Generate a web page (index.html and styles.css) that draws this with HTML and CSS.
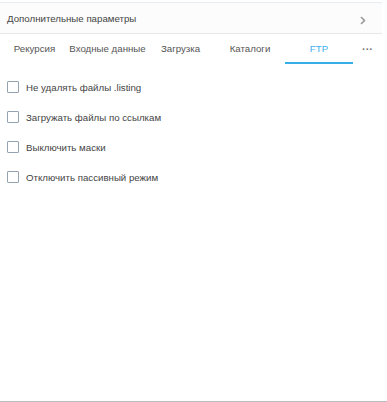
FILE: index.html
```html
<!DOCTYPE html>
<html lang="ru">
<head>
    <meta charset="UTF-8">
    <title>Дополнительные параметры</title>
    <link rel="stylesheet" href="styles.css">
</head>
<body>
    <div class="panel">
        <div class="panel-head">
            <span>Дополнительные параметры</span>
            <svg class="chevron" width="6" height="9" viewBox="0 0 6 9"><path d="M1 1l3.5 3.5L1 8" fill="none" stroke="#999" stroke-width="1.6"/></svg>
        </div>
        <div class="tabs">
            <div class="tab t1">Рекурсия</div>
            <div class="tab t2">Входные данные</div>
            <div class="tab t3">Загрузка</div>
            <div class="tab t4">Каталоги</div>
            <div class="tab t5 active">FTP</div>
            <div class="tab more">&middot;&middot;&middot;</div>
        </div>
        <div class="options">
            <label class="opt"><span class="box"></span>Не удалять файлы .listing</label>
            <label class="opt"><span class="box"></span>Загружать файлы по ссылкам</label>
            <label class="opt"><span class="box"></span>Выключить маски</label>
            <label class="opt"><span class="box"></span>Отключить пассивный режим</label>
        </div>
    </div>
    <div class="bottom-line"></div>
</body>
</html>
```

FILE: styles.css
```css
body {
    margin: 0;
    padding: 0;
    background: #fff;
    font-family: "Liberation Sans", Arial, sans-serif;
    font-size: 9.7px;
    color: #444;
    width: 387px;
    height: 402px;
    position: relative;
    overflow: hidden;
}
.panel {
    width: 382px;
    margin-top: 2px;
    border-top: 1px solid #e6edf3;
}
.panel-head {
    height: 30px;
    background: #fcfcfc;
    border-bottom: 1px solid #e8e8e8;
    display: flex;
    align-items: center;
    justify-content: space-between;
    padding: 0 16px 0 7px;
}
.chevron {
    margin-top: 4px;
}
.tabs {
    display: flex;
    height: 30px;
    align-items: stretch;
    color: #555;
    white-space: nowrap;
}
.tab {
    display: flex;
    align-items: center;
    justify-content: center;
    border-bottom: 2px solid transparent;
    box-sizing: border-box;
}
.t1 { width: 69px; }
.t2 { width: 77px; }
.t3 { width: 69px; }
.t4 { width: 70px; }
.t5 { width: 68px; }
.more { width: 29px; font-size: 11px; font-weight: bold; color: #777; padding-top: 1px; }
.tab.active {
    color: #3db1ec;
    border-bottom-color: #36aee6;
}
.options {
    padding: 17px 7px;
    display: flex;
    flex-direction: column;
    gap: 18px;
}
.opt {
    display: flex;
    align-items: center;
    height: 12px;
}
.box {
    width: 10px;
    height: 10px;
    border: 1px solid #95a3b1;
    border-radius: 1px;
    margin-right: 7px;
}
.bottom-line {
    position: absolute;
    left: 0;
    right: 0;
    bottom: 0;
    height: 1px;
    background: #bdbdbd;
}
```
